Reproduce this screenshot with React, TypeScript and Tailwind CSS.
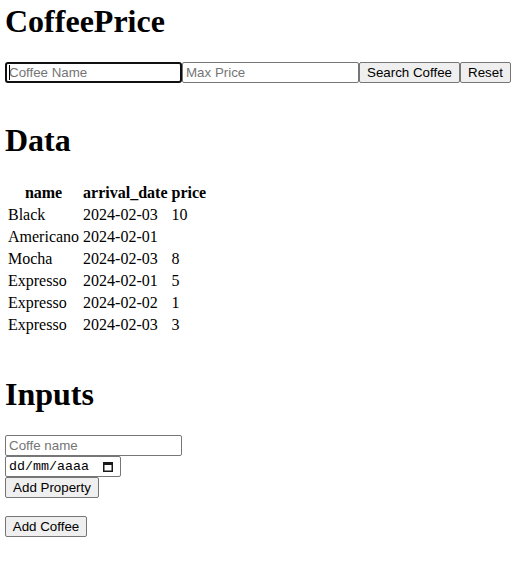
const coffees: Array<{ name: string; arrival_date: string; price: string }> = [
  { name: "Black", arrival_date: "2024-02-03", price: "10" },
  { name: "Americano", arrival_date: "2024-02-01", price: "" },
  { name: "Mocha", arrival_date: "2024-02-03", price: "8" },
  { name: "Expresso", arrival_date: "2024-02-01", price: "5" },
  { name: "Expresso", arrival_date: "2024-02-02", price: "1" },
  { name: "Expresso", arrival_date: "2024-02-03", price: "3" }
];

const control =
  "block h-[21px] border border-[#767676] rounded-[2px] bg-white px-[3px] text-[13.333px] leading-[15px] text-black placeholder:text-[#757575] outline-none";

const button =
  "block h-[21px] border border-[#767676] rounded-[2px] bg-[#efefef] text-center text-[13.333px] leading-[15px] text-black";

function CalendarIcon() {
  return (
    <svg width="10" height="11" viewBox="0 0 10 11" fill="none">
      <rect x="0.75" y="1.75" width="8.5" height="8.5" stroke="#1a1a1a" strokeWidth="1.5" />
      <rect x="0" y="1" width="10" height="3" fill="#1a1a1a" />
    </svg>
  );
}

export default function App() {
  return (
    <main
      className="flex min-h-screen flex-col items-start bg-white px-[5px] pt-[3px] text-black"
      style={{ fontFamily: '"Liberation Serif", "Times New Roman", serif' }}
    >
      <h1 className="mb-[22px] text-[32px] font-bold leading-[37px]">CoffeePrice</h1>

      <div className="flex" style={{ fontFamily: '"Liberation Sans", Arial, sans-serif' }}>
        <div className="relative h-[21px]">
          <input
            className="block h-[21px] w-[177px] rounded-[3px] border-2 border-[#101010] bg-white px-[2px] text-[13.333px] leading-[15px] text-black outline-none placeholder:text-[#757575]"
            placeholder="Coffee Name"
            type="text"
          />
          <span className="absolute left-[4px] top-[3px] h-[15px] w-px bg-black" />
        </div>
        <input className={`${control} w-[177px]`} placeholder="Max Price" type="text" />
        <button className={`${button} w-[101px]`} type="button">
          Search Coffee
        </button>
        <button className={`${button} w-[51px]`} type="button">
          Reset
        </button>
      </div>

      <h1 className="mb-[22px] mt-[39px] text-[32px] font-bold leading-[37px]">Data</h1>

      <table className="border-separate border-spacing-[2px] text-[16px] leading-[18px]">
        <thead>
          <tr>
            <th className="p-px text-center font-bold">name</th>
            <th className="p-px text-center font-bold">arrival_date</th>
            <th className="p-px text-center font-bold">price</th>
          </tr>
        </thead>
        <tbody>
          {coffees.map((coffee, index) => (
            <tr key={index}>
              <td className="p-px text-left">{coffee.name}</td>
              <td className="p-px text-left">{coffee.arrival_date}</td>
              <td className="p-px text-left">{coffee.price}</td>
            </tr>
          ))}
        </tbody>
      </table>

      <h1 className="mb-[22px] mt-[39px] text-[32px] font-bold leading-[37px]">Inputs</h1>

      <div
        className="flex flex-col items-start"
        style={{ fontFamily: '"Liberation Sans", Arial, sans-serif' }}
      >
        <input className={`${control} w-[177px]`} placeholder="Coffe name" type="text" />
        <div className="flex h-[21px] w-[116px] items-center justify-between rounded-[2px] border border-[#767676] bg-white pl-[3px] pr-[7px]">
          <span
            className="text-[13.333px] leading-[15px] text-black"
            style={{ fontFamily: '"Liberation Mono", "Courier New", monospace' }}
          >
            dd/mm/aaaa
          </span>
          <CalendarIcon />
        </div>
        <button className={`${button} w-[94px]`} type="button">
          Add Property
        </button>
        <button className={`${button} mt-[18px] w-[82px]`} type="button">
          Add Coffee
        </button>
      </div>
    </main>
  );
}
